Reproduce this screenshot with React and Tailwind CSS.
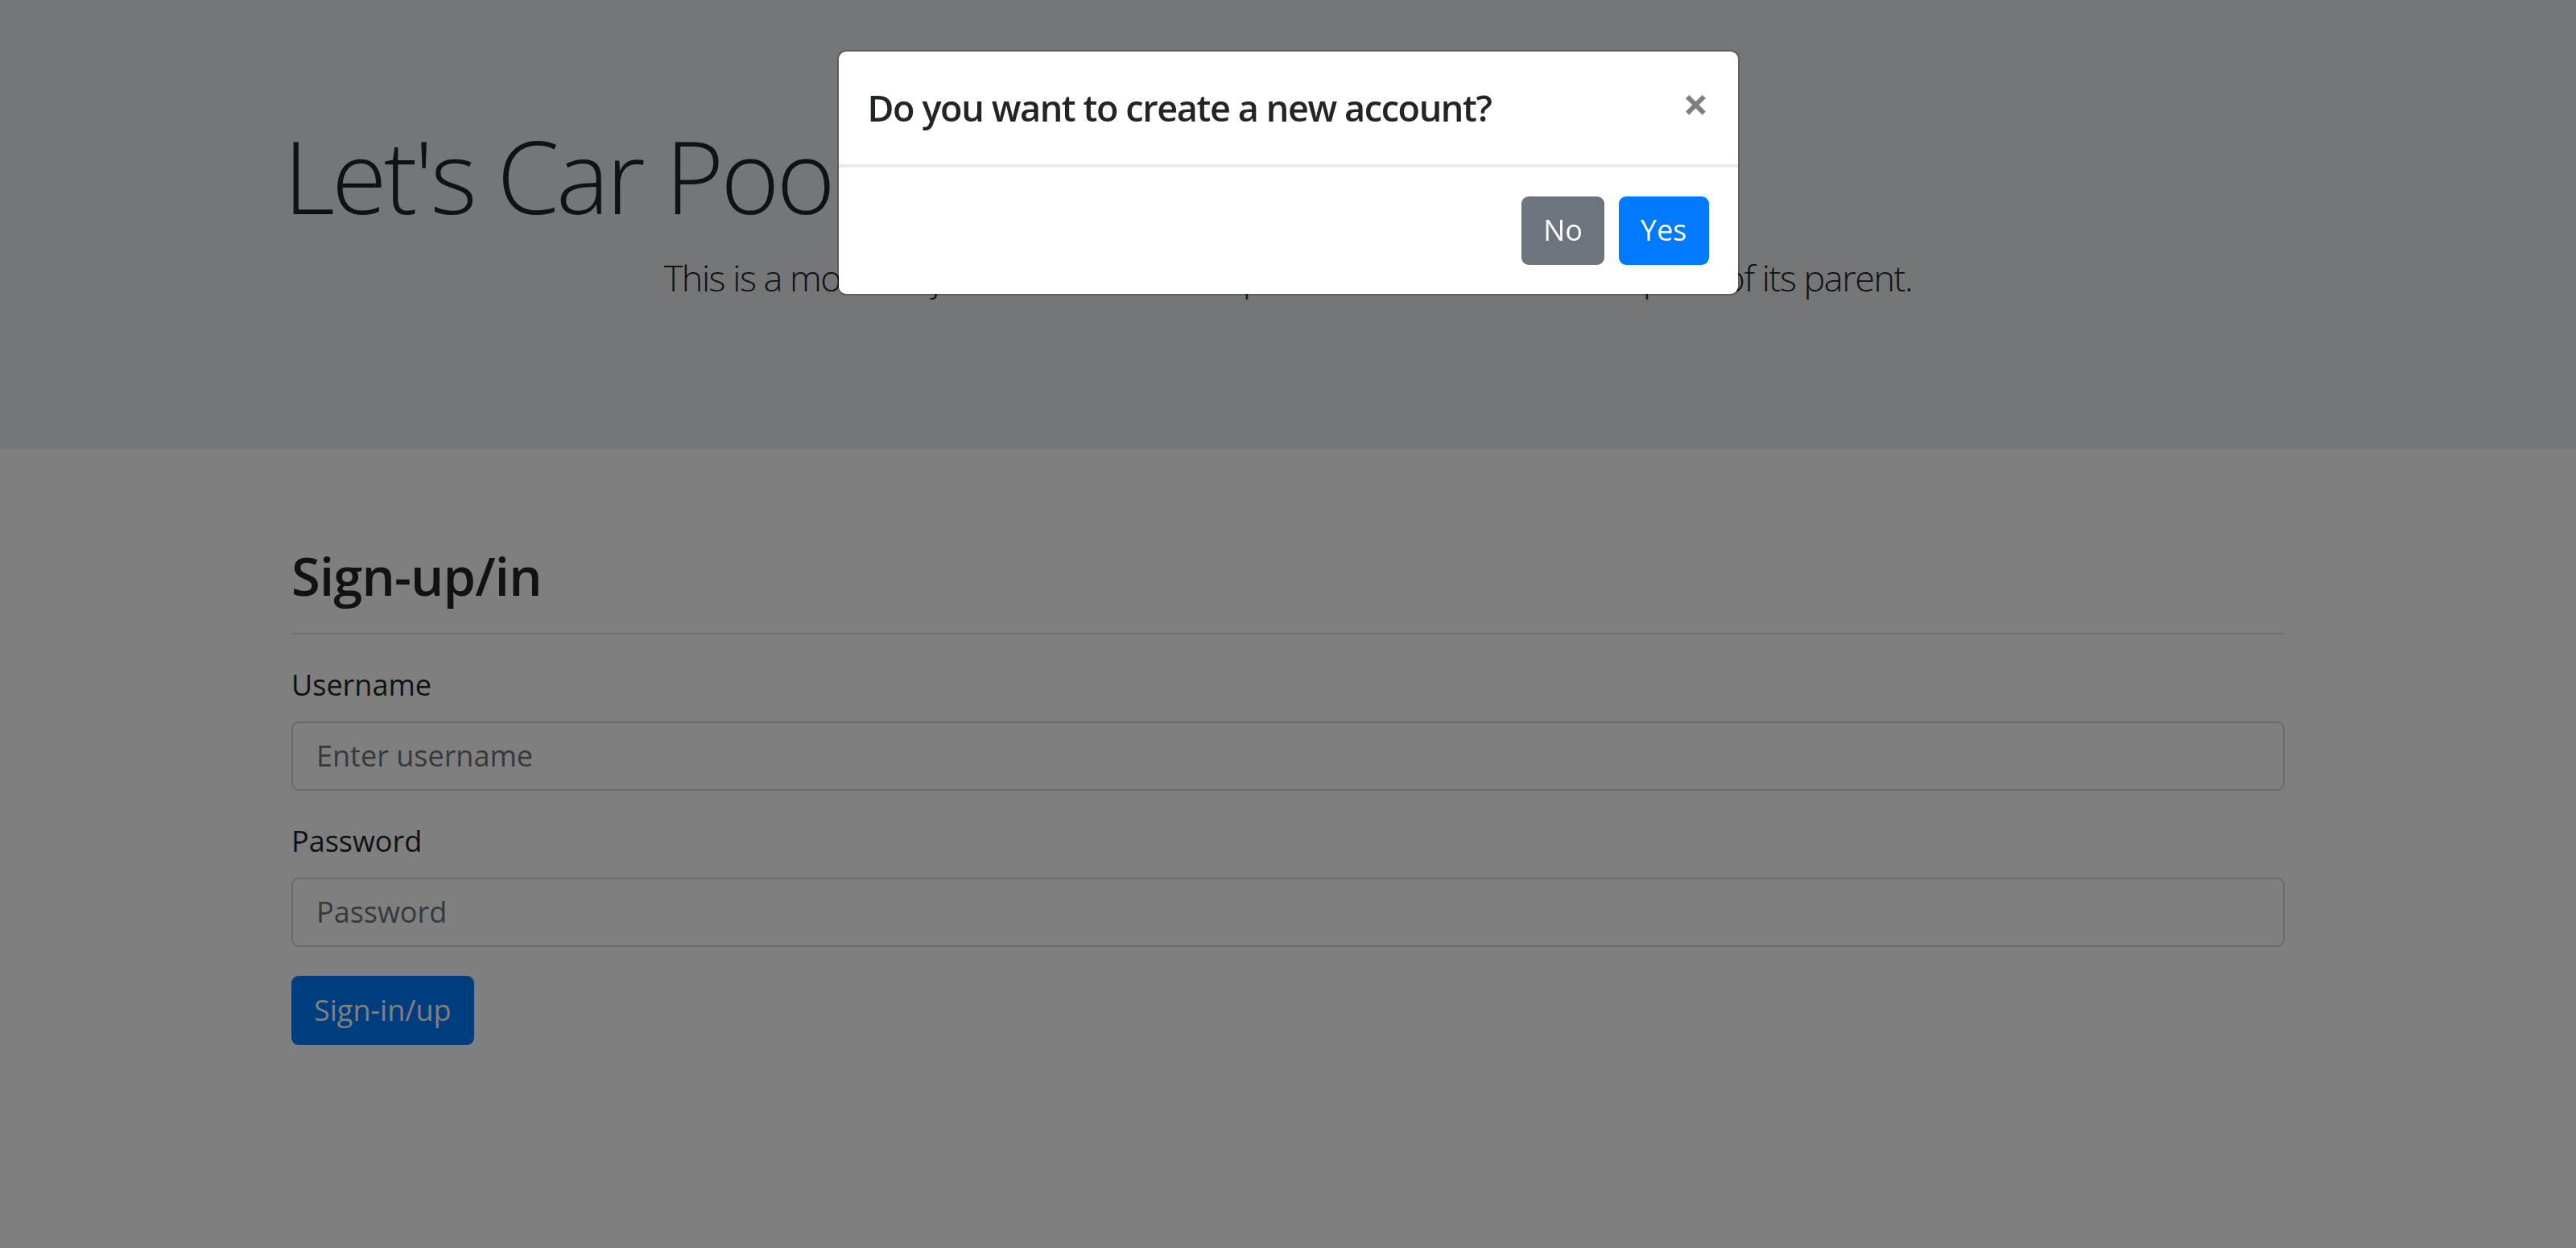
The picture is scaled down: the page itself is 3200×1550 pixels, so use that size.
import { useState } from "react"

const font = "font-['Open_Sans','Noto_Sans',sans-serif]"

function ConfirmModal({ onNo, onYes }) {
    return (
        <>
            <div className="fixed inset-0 bg-black/50" />
            <div className="fixed inset-0 flex justify-center items-start pt-[62px]">
                <div className="w-[1121px] bg-white border-2 border-black/20 rounded-[11px] bg-clip-padding">
                    <div className="flex items-start justify-between p-[36px] border-b-2 border-[#e9ecef]">
                        <h5 className="text-[45px] leading-[1.5] font-semibold tracking-[-1.4px]">Do you want to create a new account?</h5>
                        <button onClick={onNo} className="p-[36px] -m-[36px] ml-auto text-[56px] font-bold leading-none text-black opacity-50">
                            ×
                        </button>
                    </div>
                    <div className="flex justify-end items-center gap-[18px] p-[36px] border-t-2 border-[#e9ecef]">
                        <button onClick={onNo} className="h-[85px] px-[27px] rounded-[9px] bg-[#6c757d] text-white text-[36px]">No</button>
                        <button onClick={onYes} className="h-[85px] px-[27px] rounded-[9px] bg-[#007bff] text-white text-[36px]">Yes</button>
                    </div>
                </div>
            </div>
        </>
    )
}

export default function App() {
    const [username, setUsername] = useState('')
    const [password, setPassword] = useState('')
    const [showModal, setShowModal] = useState(true)

    return (
        <div className={`relative min-h-screen bg-white text-[#212529] ${font}`}>
            <div className="bg-[#e9ecef] py-[143px] mb-[72px]">
                <div className="w-[2512px] mx-auto">
                    <h1 className="text-[125px] font-light leading-[1.2] mb-[18px] pl-[8px] tracking-[-4px]">Let's Car Pool</h1>
                    <p className="text-[45px] font-light leading-[1.5] mb-[36px] text-center tracking-[-1.5px]">
                        This is a modified jumbotron that occupies the entire horizontal space of its parent.
                    </p>
                </div>
            </div>

            <div className="w-[2476px] mx-auto pt-[46px]">
                <h2 className="text-[65px] font-semibold leading-[1.2] tracking-[-0.8px]">Sign-up/in</h2>
                <hr className="mt-[32px] mb-[36px] border-t-2 border-black/10" />

                <div className="mb-[36px]">
                    <label className="block text-[36px] leading-[1.5] mb-[18px]">Username</label>
                    <input
                        type="text"
                        value={username}
                        onChange={e => setUsername(e.target.value)}
                        placeholder="Enter username"
                        className="w-full h-[86px] px-[29px] text-[36px] border-2 border-[#ced4da] rounded-[9px] bg-white placeholder:text-[#6c757d] outline-none"
                    />
                </div>

                <div className="mb-[36px]">
                    <label className="block text-[36px] leading-[1.5] mb-[18px]">Password</label>
                    <input
                        type="password"
                        value={password}
                        onChange={e => setPassword(e.target.value)}
                        placeholder="Password"
                        className="w-full h-[86px] px-[29px] text-[36px] border-2 border-[#ced4da] rounded-[9px] bg-white placeholder:text-[#6c757d] outline-none"
                    />
                </div>

                <button onClick={() => setShowModal(true)} className="h-[86px] px-[28px] rounded-[9px] bg-[#007bff] text-white text-[36px]">
                    Sign-in/up
                </button>
            </div>

            {showModal && <ConfirmModal onNo={() => setShowModal(false)} onYes={() => setShowModal(false)} />}
        </div>
    )
}
